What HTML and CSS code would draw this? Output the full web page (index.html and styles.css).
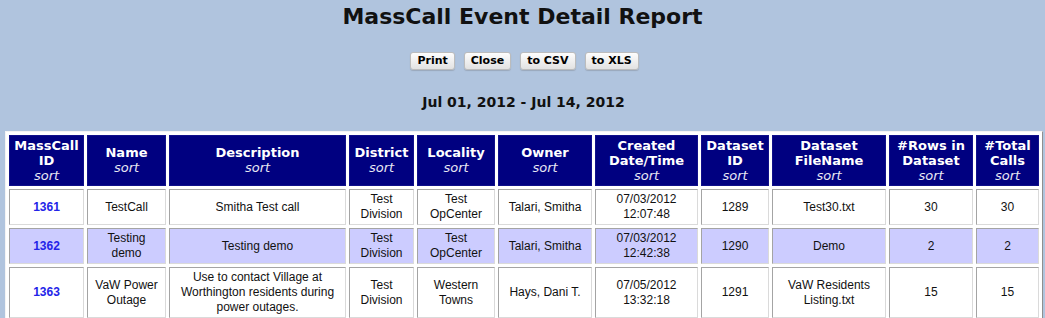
FILE: index.html
```html
<html lang="en">

<head>
	<meta charset="UTF-8" />
	<title>MassCall Event Detail Report</title>
<link rel="stylesheet" href="styles.css">
</head>

<body>
	<h1 class="report-title">MassCall Event Detail Report</h1>
	<div class="report-actions">
		<button class="report-actions__btn" type="button">Print</button>
		<button class="report-actions__btn" type="button">Close</button>
		<button class="report-actions__btn" type="button">to CSV</button>
		<button class="report-actions__btn" type="button">to XLS</button>
	</div>
	<p class="report-range">Jul 01, 2012 - Jul 14, 2012</p>

	<table class="report-table">
		<thead>
			<tr>
				<th class="col-id">MassCall<br>ID<br><a class="sort-link" href="#">sort</a></th>
				<th class="col-name">Name<br><a class="sort-link" href="#">sort</a></th>
				<th class="col-desc">Description<br><a class="sort-link" href="#">sort</a></th>
				<th class="col-district">District<br><a class="sort-link" href="#">sort</a></th>
				<th class="col-locality">Locality<br><a class="sort-link" href="#">sort</a></th>
				<th class="col-owner">Owner<br><a class="sort-link" href="#">sort</a></th>
				<th class="col-created">Created<br>Date/Time<br><a class="sort-link" href="#">sort</a></th>
				<th class="col-dataset">Dataset<br>ID<br><a class="sort-link" href="#">sort</a></th>
				<th class="col-file">Dataset<br>FileName<br><a class="sort-link" href="#">sort</a></th>
				<th class="col-rows">#Rows in<br>Dataset<br><a class="sort-link" href="#">sort</a></th>
				<th class="col-calls">#Total<br>Calls<br><a class="sort-link" href="#">sort</a></th>
			</tr>
		</thead>
		<tbody>
			<tr>
				<td><a class="event-link" href="#">1361</a></td>
				<td>TestCall</td>
				<td>Smitha Test call</td>
				<td>Test Division</td>
				<td>Test OpCenter</td>
				<td>Talari, Smitha</td>
				<td>07/03/2012 12:07:48</td>
				<td>1289</td>
				<td>Test30.txt</td>
				<td>30</td>
				<td>30</td>
			</tr>
			<tr class="row-alt">
				<td><a class="event-link" href="#">1362</a></td>
				<td>Testing demo</td>
				<td>Testing demo</td>
				<td>Test Division</td>
				<td>Test OpCenter</td>
				<td>Talari, Smitha</td>
				<td>07/03/2012 12:42:38</td>
				<td>1290</td>
				<td>Demo</td>
				<td>2</td>
				<td>2</td>
			</tr>
			<tr>
				<td><a class="event-link" href="#">1363</a></td>
				<td>VaW Power Outage</td>
				<td>Use to contact Village at Worthington residents during power outages.</td>
				<td>Test Division</td>
				<td>Western Towns</td>
				<td>Hays, Dani T.</td>
				<td>07/05/2012 13:32:18</td>
				<td>1291</td>
				<td>VaW Residents Listing.txt</td>
				<td>15</td>
				<td>15</td>
			</tr>
		</tbody>
	</table>
</body>

</html>
```

FILE: styles.css
```css
:root{
  --page-bg: #b0c4de;
  --head-bg: #000080;
  --row-alt: #ccccff;
  --link: #2424e8;
}

body{
  margin: 0;
  background-color: var(--page-bg);
  font-family: "DejaVu Sans", Verdana, sans-serif;
  color: #111;
}

.report-title{
  margin: 4px 0 0;
  font-size: 22px;
  line-height: 26px;
  text-align: center;
}

.report-actions{
  display: flex;
  justify-content: center;
  gap: 9px;
  margin-top: 22px;
  padding-left: 4px;
}

.report-actions__btn{
  font-family: "DejaVu Sans", Verdana, sans-serif;
  font-size: 11px;
  font-weight: bold;
  line-height: 14px;
  padding: 1px 6px;
  border: 1px solid #bcbcbc;
  border-radius: 3px;
  background: linear-gradient(#fdfdfd, #e2e2e2);
  box-shadow: 0 1px 1px #9aa8bb;
  color: #000;
}

.report-range{
  margin: 24px 0 0;
  font-size: 14px;
  font-weight: bold;
  line-height: 16px;
  text-align: center;
  padding-left: 2px;
}

/* table */
.report-table{
  margin: 21px 0 0 5px;
  width: 1038px;
  table-layout: fixed;
  border-collapse: separate;
  border-spacing: 3px;
  background-color: #fff;
  border: 1px solid;
  border-color: #f4f4f4 #8f8f8f #8f8f8f #f4f4f4;
}

.report-table th{
  box-sizing: border-box;
  height: 51px;
  background-color: var(--head-bg);
  border: 1px solid #10108a;
  color: #fff;
  font-size: 13px;
  font-weight: bold;
  line-height: 15px;
  padding: 0 1px 1px;
  white-space: nowrap;
  vertical-align: middle;
}

.sort-link{
  color: #e8e8f4;
  font-weight: normal;
  font-style: italic;
  text-decoration: none;
}

.col-id{ width: 75px; }
.col-name{ width: 79px; }
.col-desc{ width: 177px; }
.col-district{ width: 65px; }
.col-locality{ width: 78px; }
.col-owner{ width: 94px; }
.col-created{ width: 103px; }
.col-dataset{ width: 68px; }
.col-file{ width: 114px; }
.col-rows{ width: 84px; }
.col-calls{ width: 63px; }

.report-table td{
  border: 1px solid;
  border-color: #a4a4a4 #dadada #dadada #a4a4a4;
  font-family: "Liberation Sans", Arial, sans-serif;
  font-size: 12px;
  line-height: 15px;
  padding: 2px 4px;
  text-align: center;
  vertical-align: middle;
  color: #111;
}

.row-alt td{
  background-color: var(--row-alt);
}

.event-link{
  color: var(--link);
  font-size: 12px;
  font-weight: bold;
  text-decoration: none;
}
```
